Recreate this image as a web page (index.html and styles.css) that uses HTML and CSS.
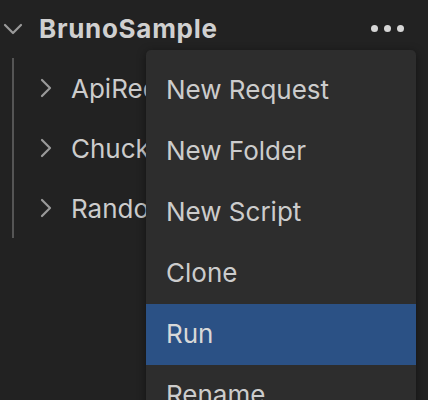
FILE: index.html
```html
<!DOCTYPE html>
<html lang="en">
<head>
  <meta charset="UTF-8" />
  <title>Collections</title>
  <link rel="stylesheet" href="styles.css">
</head>
<body>
  <div class="sidebar">
    <div class="collection">
      <div class="collection-header">
        <svg class="chevron-down" width="20" height="12" viewBox="0 0 20 12">
          <path d="M2 2 L10 10 L18 2" fill="none" stroke="#9a9a9a" stroke-width="2.2" stroke-linecap="round" stroke-linejoin="round"/>
        </svg>
        <span class="collection-name">BrunoSample</span>
        <div class="more">
          <span></span><span></span><span></span>
        </div>
      </div>
      <div class="children">
        <div class="item">
          <svg class="chevron-right" width="12" height="20" viewBox="0 0 12 20">
            <path d="M2 2 L10 10 L2 18" fill="none" stroke="#9a9a9a" stroke-width="2.2" stroke-linecap="round" stroke-linejoin="round"/>
          </svg>
          <span>ApiRequests</span>
        </div>
        <div class="item">
          <svg class="chevron-right" width="12" height="20" viewBox="0 0 12 20">
            <path d="M2 2 L10 10 L2 18" fill="none" stroke="#9a9a9a" stroke-width="2.2" stroke-linecap="round" stroke-linejoin="round"/>
          </svg>
          <span>ChuckNorris</span>
        </div>
        <div class="item">
          <svg class="chevron-right" width="12" height="20" viewBox="0 0 12 20">
            <path d="M2 2 L10 10 L2 18" fill="none" stroke="#9a9a9a" stroke-width="2.2" stroke-linecap="round" stroke-linejoin="round"/>
          </svg>
          <span>RandomUser</span>
        </div>
      </div>
    </div>

    <ul class="menu">
      <li>New Request</li>
      <li>New Folder</li>
      <li>New Script</li>
      <li>Clone</li>
      <li class="active">Run</li>
      <li>Rename</li>
    </ul>
  </div>
</body>
</html>
```

FILE: styles.css
```css
body {
  margin: 0;
  background: #222222;
  font-family: Inter, "Noto Sans", sans-serif;
  color: #cccccc;
  height: 400px;
  overflow: hidden;
}

.sidebar {
  position: relative;
  width: 428px;
  height: 400px;
}

.collection-header {
  display: flex;
  align-items: center;
  height: 56px;
  padding-left: 3px;
}

.chevron-down {
  margin-top: 1px;
}

.collection-name {
  margin-left: 16px;
  font-size: 26px;
  font-weight: 700;
  letter-spacing: 0.7px;
  color: #d0d0d0;
}

.more {
  margin-left: auto;
  margin-right: 24px;
  display: flex;
  gap: 6px;
}

.more span {
  width: 7px;
  height: 7px;
  border-radius: 50%;
  background: #d6d6d6;
}

.children {
  margin-top: 2px;
  margin-left: 12px;
  border-left: 2px solid #555555;
}

.item {
  display: flex;
  align-items: center;
  height: 60px;
  padding-left: 26px;
  font-size: 26px;
  color: #cccccc;
}

.chevron-right {
  margin-right: 19px;
}

.menu {
  position: absolute;
  left: 146px;
  top: 50px;
  width: 270px;
  margin: 0;
  padding: 10px 0 0;
  list-style: none;
  background: #2d2d2d;
  border-radius: 5px;
  box-shadow: 0 2px 10px rgba(0, 0, 0, 0.45);
}

.menu li {
  height: 61px;
  line-height: 60px;
  padding-left: 20px;
  font-size: 26px;
  color: #cccccc;
}

.menu li.active {
  background: #2b5185;
  color: #d8d8d8;
}
```
